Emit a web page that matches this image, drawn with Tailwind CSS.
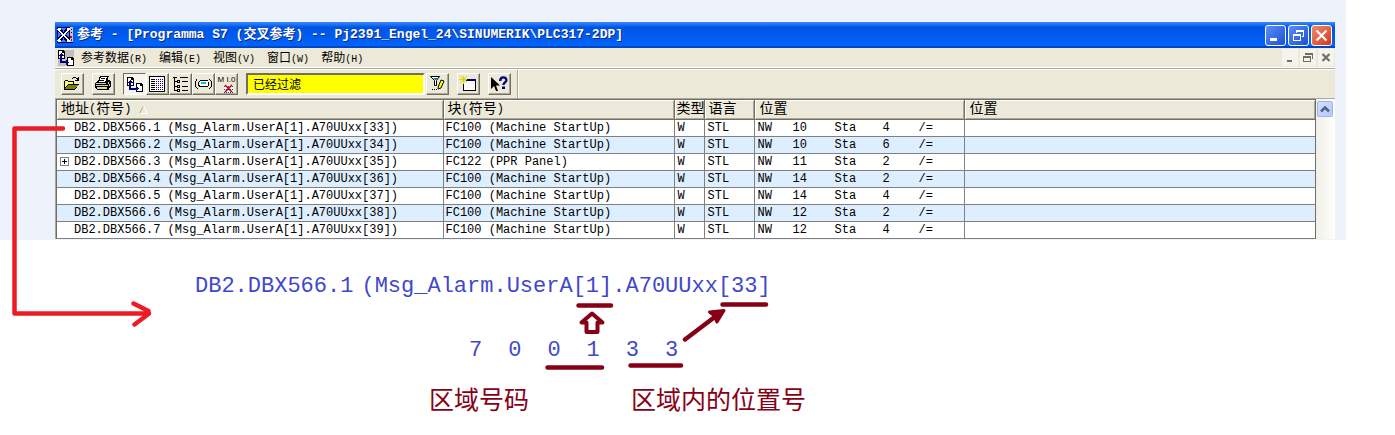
<!DOCTYPE html>
<html lang="zh-CN">
<head>
<meta charset="utf-8">
<title>交叉参考</title>
<script src="https://cdn.jsdelivr.net/npm/@tailwindcss/browser@4"></script>
</head>
<body class="relative bg-white text-black font-['Liberation_Mono','Noto_Sans_CJK_SC',monospace]">
<div class="mr-[49px] h-60 overflow-hidden bg-[#eef2fa] pt-[22px] pl-[55px] pr-[11px]">
  <main class="bg-[#ece9d8]">
    <header class="flex h-[26px] items-center bg-linear-to-b from-[#3a8cff] via-[#0054e3] via-20% to-[#0066ff] pr-[3px] pl-[2px] shadow-[inset_0_-2px_0_#0047c8]">
      <svg class="size-4 shrink-0" viewBox="0 0 16 16" shape-rendering="crispEdges"><path fill="#000050" d="M0 0h16v16H0z"/><path fill="#3f80ff" d="M4 1h5L6.500 5zM4 15h5l-2.500-4zM1 5v5l4-2.500zM12 5v5L8 7.500z"/><path stroke="#fff" stroke-width="1.500" d="M1 2l11 12M12 2L1 14"/><path fill="#fff" d="M1 1h3v2H1zM10 1h3v2h-3zM1 13h3v2H1zM10 13h3v2h-3z"/><path fill="#c0c0c0" d="M13 0h3v15h-3z"/><path fill="#000" d="M14 2h1v1h-1zM14 5h1v1h-1z"/><path fill="#c00000" d="M13 9h2v2h-2zM14 12h1v2h-1z"/></svg>
      <h1 class="ml-1 flex-1 overflow-hidden text-[13px] leading-5 font-bold whitespace-pre text-white [text-shadow:1px_1px_0_#0a2a80]">参考 - [Programma S7 (交叉参考) -- Pj2391_Engel_24\SINUMERIK\PLC317-2DP]</h1>
      <div class="flex gap-[2px]">
        <button aria-label="最小化" class="size-[21px] rounded-[3px] border border-white bg-linear-to-br from-[#5b8df5] to-[#1c4fd6]"><svg viewBox="0 0 19 19" shape-rendering="crispEdges"><path fill="#fff" d="M4 12h7v3H4z"/></svg></button>
        <button aria-label="还原" class="size-[21px] rounded-[3px] border border-white bg-linear-to-br from-[#5b8df5] to-[#1c4fd6]"><svg viewBox="0 0 19 19" shape-rendering="crispEdges"><path fill="#fff" d="M7 4h8v7h-2v-1h1V6H8v1H7zM4 8h8v7H4zM5 10v4h6v-4z" fill-rule="evenodd"/></svg></button>
        <button aria-label="关闭" class="size-[21px] rounded-[3px] border border-white bg-linear-to-br from-[#f08a6c] to-[#cf3512]"><svg viewBox="0 0 19 19"><path stroke="#fff" stroke-width="2.200" d="M4.500 4.500l10 10M14.500 4.500l-10 10"/></svg></button>
      </div>
    </header>

    <div class="flex h-[19px] items-center pr-px pl-1">
      <svg class="-ml-px size-4 shrink-0" viewBox="0 0 16 16" shape-rendering="crispEdges"><path fill="#c0c0c0" d="M0 0h16v16H0z"/><path fill="#000" d="M0 0h5l2 2v7H0zM9 7h5l2 2v7H9z"/><path fill="#fff" d="M1 1h3v2h2v5H1zM10 8h3v2h2v5h-5z"/><path fill="#000080" d="M3 3h1v1h1v1h1v1H4v5h4v-1h1v1h1v1h1v1h-1v1H9v1H8v-2H2V6H1V5h1V4h1z"/></svg>
      <nav class="ml-[7px] flex flex-1 gap-3 pt-[3px] text-xs leading-4 whitespace-nowrap">
        <a href="#">参考数据<span class="text-[10px]">(R)</span></a>
        <a href="#">编辑<span class="text-[10px]">(E)</span></a>
        <a href="#">视图<span class="text-[10px]">(V)</span></a>
        <a href="#">窗口<span class="text-[10px]">(W)</span></a>
        <a href="#">帮助<span class="text-[10px]">(H)</span></a>
      </nav>
      <div class="flex gap-[2px]">
        <button aria-label="最小化文档" class="h-[17px] w-4 bg-[#f4f3ec]"><svg viewBox="0 0 16 17" shape-rendering="crispEdges"><path fill="#716f64" d="M5 11h5v2H5z"/></svg></button>
        <button aria-label="还原文档" class="h-[17px] w-4 bg-[#f4f3ec]"><svg viewBox="0 0 16 17" shape-rendering="crispEdges"><path fill="#716f64" fill-rule="evenodd" d="M5 4h8v6h-1V6H5zM3 7h8v6H3zM4 9v3h6V9z"/></svg></button>
        <button aria-label="关闭文档" class="h-[17px] w-4 bg-[#f4f3ec]"><svg viewBox="0 0 16 17"><path stroke="#716f64" stroke-width="2.200" d="M4.500 5l7 7M11.500 5l-7 7"/></svg></button>
      </div>
    </div>
    <div class="h-[3px] border-y border-white bg-[#aca899]"></div>

    <div class="flex h-7 items-stretch">
      <div class="flex items-start border-r border-[#aca899] pt-[3px] pr-[6px] pl-[6px] shadow-[1px_0_0_#fff]">
        <button aria-label="打开" class="h-[22px] w-[23px] border border-t-white border-r-[#716f64] border-b-[#716f64] border-l-white shadow-[inset_-1px_-1px_0_#aca899]"><svg class="h-5 w-[21px]" viewBox="0 0 21 20" shape-rendering="crispEdges"><path fill="#000" d="M10 4h1V3h3v1h2V3h1v4h-4V6h2V5h-1V4h-3v1h-1zM2 7h1V6h3v1h6v3h5v1h-1v1h-1v2h-1v1h-1v1H2z"/><path fill="#ffff60" d="M3 7h3v1h5v2H6v1H5v1H4v1H3z"/><path fill="#808000" d="M6 11h10l-3 4H3z"/></svg></button>
        <button aria-label="打印" class="ml-2 h-[22px] w-[23px] border border-t-white border-r-[#716f64] border-b-[#716f64] border-l-white shadow-[inset_-1px_-1px_0_#aca899]"><svg class="h-5 w-[21px]" viewBox="0 0 21 20" shape-rendering="crispEdges"><path fill="#000" d="M7 2h9v1h-1v3h2v1h1v6h-1v1h-1v2H4v-1H3v-1H2V9h1V8h1V7h1V6h1V3h1z"/><path fill="#fff" d="M8 3h6l-2 5H5l2-2z"/><path fill="#000" d="M8 4h4v1H8zM7 6h4v1H7z"/><path fill="#d4d0c8" d="M3 9h10v1H3zM3 11h12v1H3zM15 8h1v2h-1zM16 10h1v2h-1zM4 13h10v2H4z"/><path fill="#ffff00" d="M9 13h3v1H9z"/></svg></button>
        <button aria-label="交叉参考" aria-pressed="true" class="ml-2 h-[22px] w-[23px] border border-t-[#716f64] border-r-white border-b-white border-l-[#716f64] bg-[#f6f4ee]"><svg class="h-5 w-[21px]" viewBox="0 0 21 20" shape-rendering="crispEdges"><path fill="#000" d="M3 3h5l2 2v7H3zM12 9h5l2 2v7h-7z"/><path fill="#fff" d="M4 4h3v2h2v5H4zM13 10h3v2h2v5h-5z"/><path fill="#000080" d="M6 6h1v1h1v1h1v1H7v5h5v-2h1v1h1v1h1v1h-1v1h-1v1h-1v-1H5V9H4V8h1V7h1z"/></svg></button>
        <button aria-label="分配表" class="h-[22px] w-[23px] border border-t-white border-r-[#716f64] border-b-[#716f64] border-l-white shadow-[inset_-1px_-1px_0_#aca899]"><svg class="h-5 w-[21px]" viewBox="0 0 21 20" shape-rendering="crispEdges"><path fill="#000" d="M2 2h16v16H2z"/><path fill="#fff" d="M3 3h14v14H3z"/><path stroke="#000" d="M4 5.500h4M4 7.500h4M4 9.500h4M4 11.500h4M4 13.500h4M4 15.500h4"/><path stroke="#0000a0" stroke-dasharray="1 1" d="M9.500 5v11M11.500 5v11M13.500 5v11M15.500 5v11"/></svg></button>
        <button aria-label="程序结构" class="h-[22px] w-[23px] border border-t-white border-r-[#716f64] border-b-[#716f64] border-l-white shadow-[inset_-1px_-1px_0_#aca899]"><svg class="h-5 w-[21px]" viewBox="0 0 21 20" shape-rendering="crispEdges"><path fill="none" stroke="#000" d="M3 3.500h4M4.500 4v13M10 3.500h8M12 7.500h6M5 7.500h2M5 12.500h2M5 16.500h2M12 12.500h6M12 16.500h6M7.500 6.500h2v2h-2zM7.500 11.500h2v2h-2zM7.500 15.500h2v2h-2z"/></svg></button>
        <button aria-label="未使用的符号" class="h-[22px] w-[23px] border border-t-white border-r-[#716f64] border-b-[#716f64] border-l-white shadow-[inset_-1px_-1px_0_#aca899]"><svg class="h-5 w-[21px]" viewBox="0 0 21 20" shape-rendering="crispEdges"><path fill="none" stroke="#000" d="M4 5.500h-1M3.500 6v1M2.500 7v6M3.500 13v1M4 14.500h1M16 5.500h1M17.500 6v1M18.500 7v6M17.500 13v1M17 14.500h-1M7 6.500h8M5.500 8v4M15.500 8v4M7 12.500h8M6.500 7v1M6.500 11v2"/><path fill="#fff" d="M7 7h8v5H7z"/><path fill="#00c8e0" d="M8 8h5v2H8z"/></svg></button>
        <button aria-label="无符号的地址" class="h-[22px] w-[23px] border border-t-white border-r-[#716f64] border-b-[#716f64] border-l-white shadow-[inset_-1px_-1px_0_#aca899]"><span class="block h-[9px] text-center font-['Liberation_Sans',sans-serif] text-[8px] leading-[9px] whitespace-nowrap">M I.0</span><svg class="h-[10px] w-[21px]" viewBox="0 0 21 10"><path fill="#fff" d="M8 1h9v8H8z"/><path stroke="#3030a0" stroke-dasharray="1 1" d="M8 2.500h9M8 5.500h9M8 8.500h9"/><path stroke="#c00000" stroke-width="1.500" d="M9 1l7 7M16 1L9 8"/></svg></button>
        <input aria-label="过滤器" value="已经过滤" readonly class="ml-2 h-[22px] w-[179px] border-2 border-t-[#716f64] border-r-white border-b-white border-l-[#716f64] bg-[#ffff00] px-[5px] text-xs leading-4 outline-none">
        <button aria-label="过滤设置" class="ml-px h-[22px] w-[23px] border border-t-white border-r-[#716f64] border-b-[#716f64] border-l-white shadow-[inset_-1px_-1px_0_#aca899]"><svg class="h-5 w-[21px]" viewBox="0 0 21 20"><path fill="#fff" stroke="#000" d="M3.500 2.500h9L9.500 6.500v5h-2v-5z"/><path fill="#008080" d="M6 4h5L9 6H8z"/><path fill="#ffff00" stroke="#000" d="M14 6l3 1-3 7-3 1 .5-3z"/><path fill="#000" d="M5 15h1v1H5zM7 15h1v1H7zM9 15h1v1H9z"/></svg></button>
        <button aria-label="新建窗口" class="ml-2 h-[22px] w-[23px] border border-t-white border-r-[#716f64] border-b-[#716f64] border-l-white shadow-[inset_-1px_-1px_0_#aca899]"><svg class="h-5 w-[21px]" viewBox="0 0 21 20" shape-rendering="crispEdges"><path fill="#000" d="M6 5h12v12H5V9h1z"/><path fill="#fff" d="M6 7h11v9H6z"/><path fill="#000080" d="M8 5h10v2H8z"/><path fill="#ece9d8" d="M2 2h6v7H2z"/><path stroke="#e0d800" d="M5.500 2v8M1 5.500h8M2 2l7 7M9 2L2 9"/></svg></button>
        <button aria-label="帮助" class="ml-2 h-[22px] w-[23px] border border-t-white border-r-[#716f64] border-b-[#716f64] border-l-white shadow-[inset_-1px_-1px_0_#aca899]"><svg class="h-5 w-[21px]" viewBox="0 0 21 20"><path fill="#000" d="M2 3v12l3-3 2 5h2l-2-5.500h4z"/><path fill="none" stroke="#000080" stroke-width="2.400" d="M11.200 7c0-5 6.600-4.500 6.100-.5-.3 2-2.800 2-2.800 4.500"/><path fill="#000080" d="M13 12.500h3V15h-3z"/></svg></button>
      </div>
    </div>

    <div class="flex border-t border-l border-[#aca899]">
      <div class="flex-1 border-t border-r border-l border-[#716f64] bg-white">
        <table class="w-full table-fixed border-collapse text-xs leading-4">
          <colgroup><col class="w-[386px]"><col class="w-[231px]"><col class="w-[30px]"><col class="w-[50px]"><col class="w-[210px]"><col></colgroup>
          <thead>
            <tr class="h-[19px] border-b border-[#716f64] bg-[#ece9d8] text-left text-sm leading-[17px] whitespace-nowrap">
              <th class="border-r border-[#716f64] p-0 pl-1 font-normal shadow-[inset_1px_1px_0_#fff,inset_-1px_-1px_0_#aca899]"><div class="flex h-[18px] items-center">地址<span class="text-xs">(</span>符号<span class="text-xs">)</span><svg class="ml-2 size-[9px]" viewBox="0 0 9 9"><path fill="none" stroke="#aca899" d="M4.500 1L.5 8.500"/><path fill="none" stroke="#fff" d="M4.500 1l4 7.500H.5"/></svg></div></th>
              <th class="border-r border-[#716f64] p-0 pl-1 font-normal shadow-[inset_1px_1px_0_#fff,inset_-1px_-1px_0_#aca899]"><div class="flex h-[18px] items-center">块<span class="text-xs">(</span>符号<span class="text-xs">)</span></div></th>
              <th class="border-r border-[#716f64] p-0 pl-[2px] font-normal shadow-[inset_1px_1px_0_#fff,inset_-1px_-1px_0_#aca899]">类型</th>
              <th class="border-r border-[#716f64] p-0 pl-1 font-normal shadow-[inset_1px_1px_0_#fff,inset_-1px_-1px_0_#aca899]">语言</th>
              <th class="border-r border-[#716f64] p-0 pl-[5px] font-normal shadow-[inset_1px_1px_0_#fff,inset_-1px_-1px_0_#aca899]">位置</th>
              <th class="p-0 pl-[5px] font-normal shadow-[inset_1px_1px_0_#fff,inset_-1px_-1px_0_#aca899]">位置</th>
            </tr>
          </thead>
          <tbody id="rows"></tbody>
        </table>
      </div>
      <div class="w-[19px] bg-linear-to-r from-[#f1efe8] to-[#fefefb] px-px pt-[2px]">
        <button aria-label="向上滚动" class="flex size-4 items-center justify-center rounded-[2px] border border-[#9fb5ee] bg-linear-to-br from-[#d3defd] to-[#b4c8f8]"><svg class="w-[10px]" viewBox="0 0 10 7"><path fill="none" stroke="#4d6185" stroke-width="2.500" d="M1 5.500l4-4 4 4"/></svg></button>
      </div>
    </div>
  </main>
</div>

<section class="pt-[31px] pb-4 whitespace-nowrap">
  <p class="flex gap-2 pl-[195px] text-[22px] leading-8 text-[#3f48cc]"><span>DB2.DBX566.1</span><span>(Msg_Alarm.UserA[1].A70UUxx[33]</span></p>
  <p class="mt-8 flex gap-[26px] pl-[469px] text-[22px] leading-8 text-[#3f48cc]"><span>7</span><span>0</span><span>0</span><span>1</span><span>3</span><span>3</span></p>
  <p class="mt-5 flex gap-[102px] pl-[429px] text-[25px] leading-8 text-[#880015]"><span>区域号码</span><span>区域内的位置号</span></p>
</section>

<svg class="pointer-events-none absolute top-0 left-0 h-[435px] w-[830px]" viewBox="0 0 830 435" fill="none" stroke-linecap="round" stroke-linejoin="round">
  <path stroke="#ed1c24" stroke-width="4.500" d="M63 128.500H14.500V313.500H149M133.500 303.500l15 7.500v3l-14 10.500"/>
  <g stroke="#880015" stroke-width="4.500">
    <path d="M578.500 305.500H611M722.500 304.500H766M547.500 367.500H602M630.500 365.500H681M685 339.500L718 314.500"/>
    <path stroke-width="4" d="M592 313.500L581.500 322.500H586.500V332H597.500V322.500H602.500z"/>
    <path fill="#880015" stroke-width="3" d="M724 310.500L709.500 312 714 315.500 717 322z"/>
  </g>
</svg>

<template id="row">
  <tr class="h-[17px] border-b border-[#808080] whitespace-nowrap odd:bg-white even:bg-[#ddeeff]">
    <td class="border-r border-[#808080] p-0"><div class="flex items-center pl-[3px]"><span class="w-[14px]"></span><span></span></div></td>
    <td class="border-r border-[#808080] p-0 pl-[2px]"></td>
    <td class="border-r border-[#808080] p-0 pl-[3px]">W</td>
    <td class="border-r border-[#808080] p-0 pl-[3px]">STL</td>
    <td class="border-r border-[#808080] p-0"><div class="grid grid-cols-[35px_42px_48px_36px_1fr] pl-[3px]"><span>NW</span><span></span><span>Sta</span><span></span><span>/=</span></div></td>
    <td class="p-0"></td>
  </tr>
</template>
<template id="plus"><button aria-label="展开" class="block size-[9px]"><svg viewBox="0 0 9 9" shape-rendering="crispEdges"><path fill="#fff" stroke="#808080" d="M.5.5h8v8h-8z"/><path stroke="#000" d="M2 4.500h5M4.500 2v5"/></svg></button></template>
<script>
  const data = [
    ["FC100 (Machine StartUp)", 10, 4],
    ["FC100 (Machine StartUp)", 10, 6],
    ["FC122 (PPR Panel)", 11, 2],
    ["FC100 (Machine StartUp)", 14, 2],
    ["FC100 (Machine StartUp)", 14, 4],
    ["FC100 (Machine StartUp)", 12, 2],
    ["FC100 (Machine StartUp)", 12, 4]
  ];
  data.forEach(([block, nw, sta], i) => {
    const row = document.getElementById("row").content.cloneNode(true);
    const td = row.querySelectorAll("td");
    const name = td[0].querySelectorAll("span");
    name[1].textContent = `DB2.DBX566.${i + 1} (Msg_Alarm.UserA[1].A70UUxx[${33 + i}])`;
    if (i === 2) name[0].append(document.getElementById("plus").content.cloneNode(true));
    td[1].textContent = block;
    const pos = td[4].querySelectorAll("span");
    pos[1].textContent = nw;
    pos[3].textContent = sta;
    document.getElementById("rows").append(row);
  });
</script>
</body>
</html>
